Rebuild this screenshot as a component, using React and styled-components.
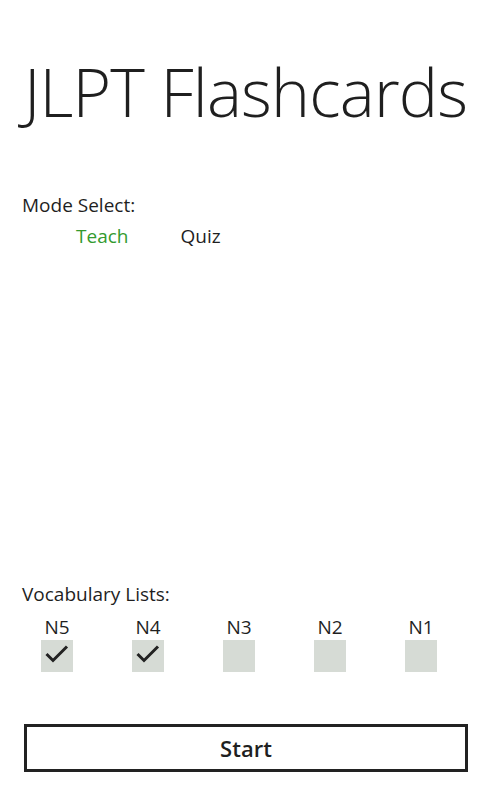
import styled, { createGlobalStyle } from "styled-components";

const GlobalStyle = createGlobalStyle`
  html, body {
    margin: 0;
    padding: 0;
    background: #ffffff;
  }
  body {
    font-family: "Open Sans", "Noto Sans", "Liberation Sans", sans-serif;
    color: #1f1f1f;
  }
`;

const lists = [
  { name: "N5", checked: true },
  { name: "N4", checked: true },
  { name: "N3", checked: false },
  { name: "N2", checked: false },
  { name: "N1", checked: false },
];

const App = () => {
  return (
    <>
      <GlobalStyle />
      <Page>
        <Title>JLPT Flashcards</Title>

        <Section $top={56}>
          <Label>Mode Select:</Label>
          <ModeRow>
            <ModeOption $active>Teach</ModeOption>
            <ModeOption>Quiz</ModeOption>
          </ModeRow>
        </Section>

        <Spacer />

        <Section>
          <Label>Vocabulary Lists:</Label>
          <ListRow>
            {lists.map((l) => (
              <ListItem key={l.name}>
                <ListName>{l.name}</ListName>
                <CheckBox>
                  {l.checked && (
                    <svg width="32" height="32" viewBox="0 0 32 32">
                      <path
                        d="M5.5 14 L12 20.5 L26 6.5"
                        fill="none"
                        stroke="#222"
                        strokeWidth="3"
                      />
                    </svg>
                  )}
                </CheckBox>
              </ListItem>
            ))}
          </ListRow>
        </Section>

        <StartButton>Start</StartButton>
      </Page>
    </>
  );
};

const Page = styled.div`
  width: 480px;
  height: 800px;
  box-sizing: border-box;
  padding: 0 0 0 22px;
  display: flex;
  flex-direction: column;
`;

const Title = styled.h1`
  margin: 46px 0 0 2px;
  font-size: 66px;
  font-weight: 300;
  line-height: 90px;
  letter-spacing: -0.8px;
  color: #1f1f1f;
  white-space: nowrap;
`;

const Section = styled.div`
  display: flex;
  flex-direction: column;
  margin-top: ${(p) => p.$top || 0}px;
`;

const Label = styled.div`
  font-size: 19px;
  line-height: 26px;
  color: #1f1f1f;
`;

const ModeRow = styled.div`
  display: flex;
  gap: 52px;
  padding-left: 54px;
  margin-top: 5px;
`;

const ModeOption = styled.div`
  font-size: 19px;
  line-height: 26px;
  color: ${(p) => (p.$active ? "#339a2e" : "#1f1f1f")};
`;

const Spacer = styled.div`
  flex: 1;
`;

const ListRow = styled.div`
  display: flex;
  margin-top: 8px;
  padding-left: 19px;
  gap: 59px;
`;

const ListItem = styled.div`
  display: flex;
  flex-direction: column;
  align-items: center;
  width: 32px;
`;

const ListName = styled.div`
  font-size: 19px;
  line-height: 24px;
  color: #1f1f1f;
`;

const CheckBox = styled.div`
  width: 32px;
  height: 32px;
  margin-top: 1px;
  background: #d6dbd5;
`;

const StartButton = styled.button`
  margin: 52px 0 28px 2px;
  width: 444px;
  height: 48px;
  box-sizing: border-box;
  border: 3px solid #222222;
  background: #ffffff;
  font-family: "Open Sans", "Noto Sans", sans-serif;
  font-size: 22px;
  font-weight: 600;
  color: #1f1f1f;
  padding: 0;
`;

export default App;
